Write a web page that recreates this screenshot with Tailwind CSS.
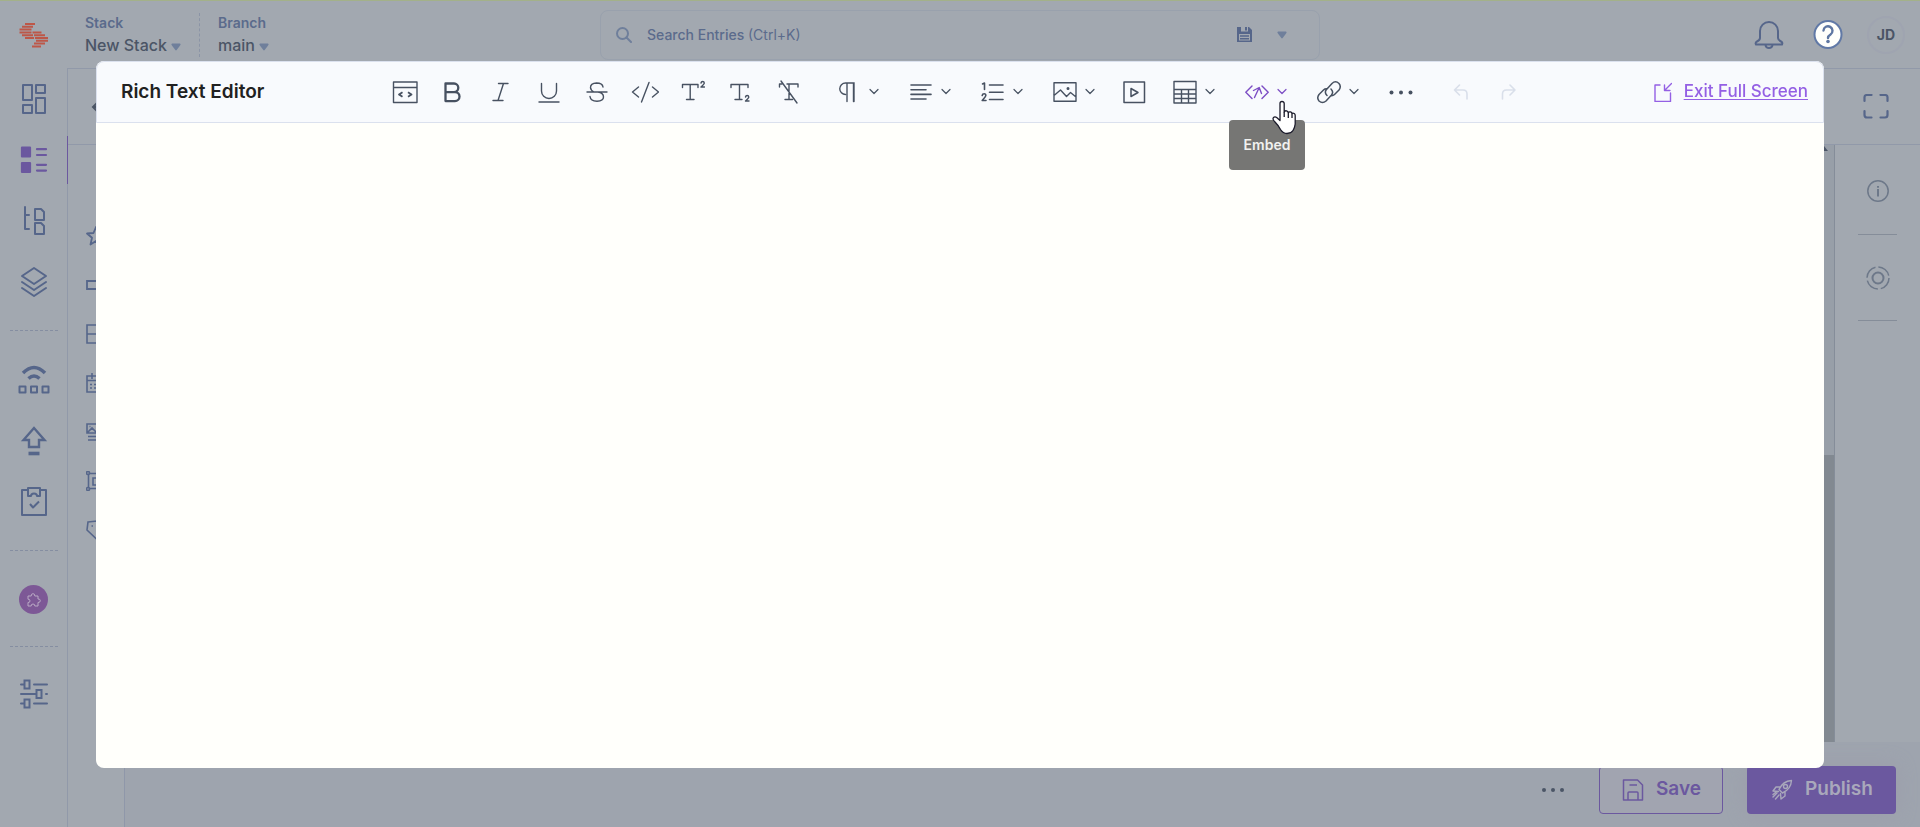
<!DOCTYPE html>
<html lang="en">
<head>
    <meta charset="UTF-8">
    <meta name="viewport" content="width=device-width, initial-scale=1.0">
    <title>Rich Text Editor - New Stack</title>

    <script src="https://cdn.jsdelivr.net/npm/@tailwindcss/browser@4"></script>
</head>
<body class="h-screen overflow-hidden bg-[#a2a8b0] font-['Inter','Liberation_Sans',sans-serif] text-[#4b5566]">

    <div class="flex h-full flex-col border-t border-[#a3b189]">

        <!-- Top bar -->
        <header class="flex h-[67px] shrink-0 items-center pr-[15px]">
            <a href="#" aria-label="Home" class="flex w-[67px] shrink-0 justify-center">
                <svg class="h-[26px] w-[30px]" viewBox="0 0 30 26" stroke="#bd5748" stroke-width="2"><path d="M6 2h10M3 4.800h11M.5 7.600h12M.5 10.400h12M13.500 10.400h9M3 13.200h11M15 13.200h11M6 16h9M16 16h13M17 18.800h12M15 21.600h11M13 24.400h9" /></svg>
            </a>
            <div class="flex h-11 w-[133px] flex-col justify-center gap-1 border-r border-dashed border-[#8b94a6] pl-[18px]">
                <label for="stack" class="text-sm leading-4 font-semibold text-[#5b6b8c]">Stack</label>
                <div class="flex items-center gap-1">
                    <select id="stack" class="appearance-none text-base leading-5 font-medium"><option>New Stack</option></select>
                    <svg class="mt-1 h-2 w-[10px] shrink-0" viewBox="0 0 10 8" fill="#6f7f9b"><path d="M1 .5h8q1 .6.400 1.500L5.700 7q-.7.800-1.400 0L.6 2Q0 1.100 1 .5z" /></svg>
                </div>
            </div>
            <div class="flex h-11 flex-col justify-center gap-1 pl-[18px]">
                <label for="branch" class="text-sm leading-4 font-semibold text-[#5b6b8c]">Branch</label>
                <div class="flex items-center gap-1">
                    <select id="branch" class="appearance-none text-base leading-5 font-medium"><option>main</option></select>
                    <svg class="mt-1 h-2 w-[10px] shrink-0" viewBox="0 0 10 8" fill="#6f7f9b"><path d="M1 .5h8q1 .6.400 1.500L5.700 7q-.7.800-1.400 0L.6 2Q0 1.100 1 .5z" /></svg>
                </div>
            </div>

            <div class="mr-[434px] ml-auto flex h-[50px] w-[720px] items-center rounded-lg border border-[#99a1ad] pr-8 pl-[15px]">
                <svg class="mr-[15px] h-4 w-4" viewBox="0 0 16 16" fill="none" stroke="#6f7f9b" stroke-width="2" stroke-linecap="round"><circle cx="6.500" cy="6.500" r="5.500" /><path d="M10.500 10.500L15 15" /></svg>
                <label for="search" class="text-sm font-medium whitespace-nowrap text-[#5b6b8c]">Search Entries <span class="font-normal">(Ctrl+K)</span></label>
                <input id="search" type="text" class="min-w-0 flex-1 bg-transparent outline-none">
                <button type="button" aria-label="Saved searches" class="mr-[25px]">
                    <svg class="h-[15px] w-[15px]" viewBox="0 0 15 15"><path d="M0 0h12l3 3v12H0z" fill="#56668a" /><path d="M4 0h7v4.500H4zM2 7h11v6.500H2z" fill="#a2a8b0" /><path d="M8 0h2v3.500H8zM3 8.200h9v1.500H3zM3 11h9v1.500H3z" fill="#56668a" /></svg>
                </button>
                <button type="button" aria-label="Search options">
                    <svg class="h-2 w-[10px]" viewBox="0 0 10 8" fill="#6f7f9b"><path d="M1 .5h8q1 .6.400 1.500L5.700 7q-.7.800-1.400 0L.6 2Q0 1.100 1 .5z" /></svg>
                </button>
            </div>

            <button type="button" aria-label="Notifications" class="mr-[29px]">
                <svg class="h-[30px] w-[30px]" viewBox="0 0 30 30" fill="none" stroke="#56668a" stroke-width="2" stroke-linejoin="round"><path d="M6 11a9 9 0 0 1 18 0v7q0 2 3 3.500 2 1 1 3H2q-1-2 1-3Q6 20 6 18zM11.500 25a3.500 3 0 0 0 7 0" /></svg>
            </button>
            <button type="button" aria-label="Help" class="mr-6">
                <svg class="h-[30px] w-[30px]" viewBox="0 0 30 30" fill="none"><circle cx="15" cy="14.500" r="13.500" fill="#fffffb" stroke="#6179a6" stroke-width="2" /><path d="M10.500 10.500a4.500 4.500 0 1 1 7 4q-2.500 1.500-2.500 3.500" stroke="#5f77a2" stroke-width="2.400" stroke-linecap="round" /><circle cx="15" cy="21.500" r="1.800" fill="#5f77a2" /></svg>
            </button>
            <button type="button" class="h-[38px] w-[38px] rounded-full border-2 border-[#9fa4b0] text-sm font-bold">JD</button>
        </header>

        <div class="flex min-h-0 flex-1">
            <!-- Main navigation -->
            <nav class="flex w-[68px] shrink-0 flex-col items-center border-r border-[#9199a9] text-[#56668a]">
                <a href="#" aria-label="Dashboard" class="flex h-[61px] w-full items-center justify-center">
                    <svg class="h-8 w-8" viewBox="0 0 32 32" fill="none" stroke="currentColor" stroke-width="2" stroke-linejoin="round"><path d="M5 2h9v15H5zM18 2h9v8h-9zM5 22h9v8H5zM18 15h9v15h-9z" /></svg>
                </a>
                <a href="#" aria-label="Entries" class="relative flex h-[61px] w-full items-center justify-center text-[#6b589f]">
                    <svg class="h-8 w-8" viewBox="0 0 32 32" fill="none" stroke="currentColor" stroke-width="2.200" stroke-linecap="round"><path d="M4 3.500h8v9H4zM4 19h8v9H4z" fill="currentColor" stroke-linejoin="round" /><path d="M19 5.200h9M19 11h9M19 20.800h9M19 26.600h9" /></svg>
                    <span class="absolute -right-px h-12 w-px bg-[#6b589f]"></span>
                </a>
                <a href="#" aria-label="Content models" class="flex h-[61px] w-full items-center justify-center">
                    <svg class="h-8 w-8" viewBox="0 0 32 32" fill="none" stroke="currentColor" stroke-width="2" stroke-linecap="round" stroke-linejoin="round"><path d="M7 2v22h4M7 10h4M17 4h6l3 3v8h-9zM17 18h6l3 3v8h-9z" /></svg>
                </a>
                <a href="#" aria-label="Releases" class="flex h-[61px] w-full items-center justify-center">
                    <svg class="h-8 w-8" viewBox="0 0 32 32" fill="none" stroke="currentColor" stroke-width="2" stroke-linecap="round" stroke-linejoin="round"><path d="M16 2l12 8-12 8-12-8zM4 16l12 8 12-8M4 22l12 8 12-8" /></svg>
                </a>
                <div class="my-[18px] w-12 border-t border-dashed border-[#858ea1]"></div>
                <a href="#" aria-label="Live preview" class="flex h-[61px] w-full items-center justify-center">
                    <svg class="h-8 w-8" viewBox="0 0 32 32" fill="none" stroke="currentColor"><path d="M5 9Q16-2 27 9M10.500 14.500q5.500-5 11 0" stroke-width="3.500" /><path d="M1.500 22.500h6v6h-6zM13 22.500h6v6h-6zM24.500 22.500h6v6h-6z" stroke-width="2" stroke-linejoin="round" /></svg>
                </a>
                <a href="#" aria-label="Publish queue" class="flex h-[61px] w-full items-center justify-center">
                    <svg class="h-8 w-8" viewBox="0 0 32 32" fill="none" stroke="currentColor" stroke-width="2.400"><path d="M16 3L5.500 15H11v7h10v-7h5.500z" /><path d="M10.500 28.500h11" stroke-width="3.600" /></svg>
                </a>
                <a href="#" aria-label="Tasks" class="flex h-[61px] w-full items-center justify-center">
                    <svg class="h-8 w-8" viewBox="0 0 32 32" fill="none" stroke="currentColor" stroke-width="2"><path d="M10 4H4v25h24V4h-6M10 2h12v8h-3q0-2.500-3-2.500T13 10h-3zM12 18l3 3.500 6-6" stroke-linejoin="round" /></svg>
                </a>
                <div class="my-[18px] w-12 border-t border-dashed border-[#858ea1]"></div>
                <a href="#" aria-label="Marketplace" class="flex h-[61px] w-full items-center justify-center">
                    <span class="flex h-[29px] w-[29px] items-center justify-center rounded-full bg-[#7d5896]">
                        <svg class="h-[14px] w-[14px]" viewBox="0 0 14 14" fill="none" stroke="#b9a9c4" stroke-linejoin="round"><path d="M1 3h3.200q-.2-2.300 1.800-2.300T7.800 3H11v3q2.300-.2 2.300 1.700T11 9.500V13H7.800q.2-2-1.800-2t-1.800 2H1V9.500q2 .2 2-1.600T1 6.200z" /></svg>
                    </span>
                </a>
                <div class="my-4 w-12 border-t border-dashed border-[#858ea1]"></div>
                <a href="#" aria-label="Settings" class="flex h-[61px] w-full items-center justify-center">
                    <svg class="h-8 w-8" viewBox="0 0 32 32" fill="none" stroke="currentColor" stroke-width="2" stroke-linecap="round"><path d="M3 6.500h3M16 6.500h13M3 16h15M28 16h1M3 25.500h3M16 25.500h13" /><path d="M6.500 2.500h5v8h-5zM18.500 12h5v8h-5zM6.500 21.500h5v8h-5z" /></svg>
                </a>
            </nav>

            <!-- Entry page behind the editor -->
            <div class="flex min-w-0 flex-1 flex-col border-t border-[#9199a9]">
                <div class="flex h-[76px] shrink-0 items-center justify-between border-b border-[#9199a9] pr-[31px] pl-[23px]">
                    <button type="button" aria-label="Back">
                        <svg class="h-4 w-4" viewBox="0 0 16 16" fill="none" stroke="#4b5566" stroke-width="2"><path d="M6 4L2 8l4 4M2 8h12" /></svg>
                    </button>
                    <button type="button" aria-label="Expand">
                        <svg class="h-[26px] w-[26px]" viewBox="0 0 26 26" fill="none" stroke="#56668a" stroke-width="2.200" stroke-linecap="round"><path d="M1.500 7V3q0-2 2.500-2h4.500M17.500 1H22q2.500 0 2.500 2v4M24.500 17v4q0 2.500-2.500 2.500h-4.500M8.500 23.500H4q-2.500 0-2.500-2.500v-4" /></svg>
                    </button>
                </div>
                <div class="flex min-h-0 flex-1">
                    <aside class="flex w-[57px] shrink-0 flex-col items-center border-r border-[#8f97a9] pt-[66px] text-[#56668a]">
                        <span class="flex h-[49px] items-center"><svg class="h-5 w-5" viewBox="0 0 20 20" fill="none" stroke="currentColor" stroke-width="1.800" stroke-linejoin="round"><path d="M10 1l2.500 6 6.500.5-5 4.300 1.500 6.700-5.500-3.500L4.500 18.500 6 11.800 1 7.500 7.500 7z" /></svg></span>
                        <span class="flex h-[49px] items-center"><svg class="h-5 w-5" viewBox="0 0 20 20" fill="none" stroke="currentColor" stroke-width="1.800"><path d="M1 6h18v8H1z" /></svg></span>
                        <span class="flex h-[49px] items-center"><svg class="h-5 w-5" viewBox="0 0 20 20" fill="none" stroke="currentColor" stroke-width="1.600"><path d="M1 1h18v18H1zM1 10h18" /></svg></span>
                        <span class="flex h-[49px] items-center"><svg class="h-5 w-5" viewBox="0 0 20 20" fill="none" stroke="currentColor" stroke-width="1.600"><path d="M1 3h18v16H1zM1 7.500h18M6 0v6M14 0v6M4 11.500h2M8 11.500h2M4 15h2M8 15h2" /></svg></span>
                        <span class="flex h-[49px] items-center"><svg class="h-5 w-5" viewBox="0 0 20 20" fill="none" stroke="currentColor" stroke-width="1.600"><path d="M1 2h18v9H1zM1 11l5-5 4 4M3.500 4.500h1M2 14.500h17M2 18h17" /></svg></span>
                        <span class="flex h-[49px] items-center"><svg class="h-5 w-5" viewBox="0 0 20 20" fill="none" stroke="currentColor" stroke-width="1.600"><path d="M2.500 2.500h15v15h-15zM7 7h6v7H7z" /><circle cx="2" cy="2" r="1.500" fill="#a2a8b0" /><circle cx="2" cy="18" r="1.500" fill="#a2a8b0" /></svg></span>
                        <span class="flex h-[49px] items-center"><svg class="h-5 w-5" viewBox="0 0 20 20" fill="none" stroke="currentColor" stroke-width="1.600"><path d="M2 2l9-1 8 8-8.500 10L1 10z" /><path d="M5.500 6h1.500" /></svg></span>
                    </aside>
                    <div class="flex min-w-0 flex-1 flex-col bg-[#9ea4ae]">
                        <div class="flex min-h-0 flex-1 bg-[#a2a8b0]">
                            <!-- Scroll bar -->
                            <div class="ml-auto flex w-[18px] flex-col justify-between bg-[#989fa8]">
                                <svg class="ml-1 h-2 w-2" viewBox="0 0 8 8" fill="#4b5566"><path d="M4 1l4 5H0z" /></svg>
                                <div class="h-[48%] w-full bg-[#828991]"></div>
                            </div>
                            <aside class="flex w-[86px] flex-col items-center border-l border-[#858d99] pt-[35px] text-[#6d7889]">
                                <button type="button" aria-label="Information">
                                    <svg class="h-[22px] w-[22px]" viewBox="0 0 22 22" fill="none" stroke="currentColor" stroke-width="1.500"><circle cx="11" cy="11" r="10.200" /><path d="M11 9v7.500" stroke-width="2" /><path d="M11 6v1.800" stroke-width="2" /></svg>
                                </button>
                                <div class="mt-8 mb-[31px] w-[39px] border-t border-[#858d99]"></div>
                                <button type="button" aria-label="Releases">
                                    <svg class="h-6 w-6" viewBox="0 0 24 24" fill="none" stroke="currentColor"><circle cx="12" cy="12" r="5.500" stroke-width="2" /><circle cx="12" cy="12" r="11" stroke-width="1.500" stroke-dasharray="14.300 3" /></svg>
                                </button>
                                <div class="mt-[30px] w-[39px] border-t border-[#858d99]"></div>
                            </aside>
                        </div>
                        <!-- Entry actions -->
                        <footer class="flex h-[85px] shrink-0 items-center justify-end gap-6 bg-[#9ea4ae] pt-[10px] pr-6">
                            <button type="button" aria-label="More actions" class="mr-[10px]">
                                <svg class="h-6 w-6" viewBox="0 0 24 24" fill="#4b5566"><circle cx="3" cy="12" r="2" /><circle cx="12" cy="12" r="2" /><circle cx="21" cy="12" r="2" /></svg>
                            </button>
                            <button type="button" class="flex h-12 w-[124px] items-center gap-3 rounded border border-[#6b589f] bg-[#a1a4b0] pl-[22px] text-[19px] font-semibold text-[#6b589f]">
                                <svg class="h-[22px] w-[22px]" viewBox="0 0 22 22" fill="none" stroke="currentColor" stroke-width="1.500" stroke-linejoin="round"><path d="M1.500 1h14l5 5v15h-19zM6 21v-7q0-1 1-1h8q1 0 1 1v7M7.500 6H15" /></svg>
                                Save
                            </button>
                            <button type="button" class="flex h-12 w-[149px] items-center gap-3 rounded bg-[#6b589f] pl-6 text-[19px] font-semibold text-[#a9a8bb] shadow-[0_0_20px_#9c9dab]">
                                <svg class="h-[22px] w-[22px]" viewBox="0 0 22 22" fill="none" stroke="currentColor" stroke-width="1.400" stroke-linecap="round" stroke-linejoin="round"><path d="M8 10.500Q12 2 20.500 1.500 20 10 11.500 14zM9.500 8H5l-3 4 5.500.5M14 12.500V17l-4 3-.5-5.500M6 14l-4 4M8 16l-3.500 4M4.500 13.500L2 15.500" /><circle cx="14.500" cy="7.500" r="2" /></svg>
                                Publish
                            </button>
                        </footer>
                    </div>
                </div>
            </div>
        </div>
    </div>

    <!-- Full screen editor -->
    <div class="fixed inset-0 flex px-24 pt-[61px] pb-[59px]">
        <section class="flex flex-1 flex-col rounded-lg bg-[#fffffb]">
            <div class="flex h-[62px] shrink-0 items-center rounded-t-lg border border-[#dbe1ee] bg-[#f8fafd] pr-[15px] pl-6 text-[#475161]">
                <h1 class="w-[260px] shrink-0 text-[19px] font-semibold text-[#212121]">Rich Text Editor</h1>

                <div class="flex shrink-0 items-center">
                    <button type="button" aria-label="Code block" class="flex h-12 w-12 items-center justify-center">
                        <svg class="h-6 w-[26px]" viewBox="0 0 26 24" fill="none" stroke="currentColor" stroke-width="1.400" stroke-linejoin="round"><path d="M1.500 2h23.500v20.500H1.500zM1.500 7.500H25" /><path d="M10.500 12.200l-3.500 2.300 3.500 2.300M16 12.200l3.500 2.300-3.500 2.300" stroke-width="1.800" /></svg>
                    </button>
                    <button type="button" aria-label="Bold" class="flex h-12 w-12 items-center justify-center">
                        <svg class="h-6 w-6" viewBox="0 0 24 24" fill="none" stroke="currentColor" stroke-width="2.300" stroke-linejoin="round"><path d="M4.500 3.500h8.500a4.300 4.300 0 0 1 0 8.600H4.500zM4.500 12.100H14a4.500 4.500 0 0 1 0 9H4.500z" /></svg>
                    </button>
                    <button type="button" aria-label="Italic" class="flex h-12 w-12 items-center justify-center">
                        <svg class="h-6 w-6" viewBox="0 0 24 24" fill="none" stroke="currentColor" stroke-width="1.400" stroke-linecap="round"><path d="M9.500 3.500h9.500M4 20.500h10M14.500 3.500L9 20.500" /></svg>
                    </button>
                    <button type="button" aria-label="Underline" class="flex h-12 w-12 items-center justify-center">
                        <svg class="h-6 w-6" viewBox="0 0 24 24" fill="none" stroke="currentColor" stroke-width="1.400" stroke-linecap="round"><path d="M4.500 3.500V11a7.500 7.500 0 0 0 15 0V3.500M2 22h20" /></svg>
                    </button>
                    <button type="button" aria-label="Strikethrough" class="flex h-12 w-12 items-center justify-center">
                        <svg class="h-6 w-6" viewBox="0 0 24 24" fill="none" stroke="currentColor" stroke-width="1.400" stroke-linecap="round"><path d="M18 7Q17.500 3 11.500 3 5.500 3.300 5.500 7.500 5.500 10 9 12M2 12h20M13 12q5.500 1 5.500 5T12 21.200Q5.500 21.200 5 16.500" /></svg>
                    </button>
                    <button type="button" aria-label="Inline code" class="flex h-12 w-12 items-center justify-center">
                        <svg class="h-6 w-7" viewBox="0 0 28 24" fill="none" stroke="currentColor" stroke-width="1.400" stroke-linecap="round" stroke-linejoin="round"><path d="M7.500 7L1.500 12l6 5M21.500 7l6 5-6 5M18 2.500l-7.500 19.500" /></svg>
                    </button>
                    <button type="button" aria-label="Superscript" class="flex h-12 w-12 items-center justify-center">
                        <svg class="h-6 w-6" viewBox="0 0 24 24" fill="none" stroke="currentColor" stroke-width="1.400" stroke-linecap="round" stroke-linejoin="round"><path d="M1.500 7.500V4.500H17v3M9.200 4.500v15M5.500 19.500H13M20 3q.3-1.500 1.700-1.500T23.300 3q0 1-3.300 4h3.500" /></svg>
                    </button>
                    <button type="button" aria-label="Subscript" class="flex h-12 w-12 items-center justify-center">
                        <svg class="h-6 w-6" viewBox="0 0 24 24" fill="none" stroke="currentColor" stroke-width="1.400" stroke-linecap="round" stroke-linejoin="round"><path d="M2 7.500V4.500h17v3M10.500 4.500v15M6 19.500h7M16.500 17q.3-1.500 1.700-1.500T19.800 17q0 1-3.300 4H20" /></svg>
                    </button>
                    <button type="button" aria-label="Clear formatting" class="flex h-12 w-12 items-center justify-center">
                        <svg class="h-6 w-6" viewBox="0 0 24 24" fill="none" stroke="currentColor" stroke-width="1.400" stroke-linecap="round" stroke-linejoin="round"><path d="M2.500 7V4H5M10 4h11v3M12 4v15.500M8 19.500h7.500M4 1l16 22" /></svg>
                    </button>
                </div>

                <div class="ml-3 flex shrink-0 items-center">
                    <button type="button" aria-label="Paragraph" class="flex h-12 w-[72px] items-center gap-2 pl-3">
                        <svg class="h-6 w-6" viewBox="0 0 24 24" fill="none" stroke="currentColor" stroke-width="1.400"><path d="M17 21.500V3H8.500a5.700 5.700 0 0 0 0 11.500M10 3v18.500M16.500 3v18.500" stroke-linecap="round" /></svg>
                        <svg class="h-[10px] w-[10px]" viewBox="0 0 10 10" fill="none" stroke="currentColor" stroke-width="1.200" stroke-linecap="round" stroke-linejoin="round"><path d="M1 2.500L5 6.500l4-4" /></svg>
                    </button>
                    <button type="button" aria-label="Align" class="flex h-12 w-[72px] items-center gap-2 pl-3">
                        <svg class="h-6 w-6" viewBox="0 0 24 24" fill="none" stroke="currentColor" stroke-width="1.600" stroke-linecap="round"><path d="M2 5h20M2 9.700h15M2 14.400h20M2 19h15" /></svg>
                        <svg class="h-[10px] w-[10px]" viewBox="0 0 10 10" fill="none" stroke="currentColor" stroke-width="1.200" stroke-linecap="round" stroke-linejoin="round"><path d="M1 2.500L5 6.500l4-4" /></svg>
                    </button>
                    <button type="button" aria-label="List" class="flex h-12 w-[72px] items-center gap-2 pl-3">
                        <svg class="h-6 w-6" viewBox="0 0 24 24" fill="none" stroke="currentColor" stroke-width="1.600" stroke-linecap="round" stroke-linejoin="round"><path d="M8.500 5H22M8.500 12.200H22M8.500 19.500H22M1.500 4l2-1v6.500M1.200 15.500q.3-1.700 2-1.700T4.800 15.500q0 1-3.600 5H5" /></svg>
                        <svg class="h-[10px] w-[10px]" viewBox="0 0 10 10" fill="none" stroke="currentColor" stroke-width="1.200" stroke-linecap="round" stroke-linejoin="round"><path d="M1 2.500L5 6.500l4-4" /></svg>
                    </button>
                    <button type="button" aria-label="Image" class="flex h-12 w-[72px] items-center gap-2 pl-3">
                        <svg class="h-6 w-6" viewBox="0 0 24 24" fill="none" stroke="currentColor" stroke-width="1.400" stroke-linejoin="round"><path d="M1 2.800h22v18.400H1zM1 15.500L7.500 10l6 6.500 4-4 5.500 4.500" /><circle cx="15" cy="8.500" r=".8" fill="currentColor" /></svg>
                        <svg class="h-[10px] w-[10px]" viewBox="0 0 10 10" fill="none" stroke="currentColor" stroke-width="1.200" stroke-linecap="round" stroke-linejoin="round"><path d="M1 2.500L5 6.500l4-4" /></svg>
                    </button>
                    <button type="button" aria-label="Video" class="flex h-12 w-12 items-center pl-[10px]">
                        <svg class="h-6 w-6" viewBox="0 0 24 24" fill="none" stroke="currentColor" stroke-width="1.500" stroke-linejoin="round"><path d="M1 2h20.500v20.500H1zM8 8.500v8l7-4z" /></svg>
                    </button>
                    <button type="button" aria-label="Table" class="flex h-12 w-[72px] items-center gap-2 pl-3">
                        <svg class="h-6 w-6" viewBox="0 0 24 24" fill="none" stroke="currentColor" stroke-width="1.400" stroke-linejoin="round"><path d="M1 1.500h22v21.500H1zM1 9.500h22M1 14h22M1 18.500h22M8.500 9.500V23M15.500 9.500V23" /></svg>
                        <svg class="h-[10px] w-[10px]" viewBox="0 0 10 10" fill="none" stroke="currentColor" stroke-width="1.200" stroke-linecap="round" stroke-linejoin="round"><path d="M1 2.500L5 6.500l4-4" /></svg>
                    </button>
                    <div class="relative">
                        <button type="button" aria-describedby="embed-tip" aria-label="Embed" class="flex h-12 w-[72px] items-center gap-2 pl-3 text-[#7c4dc4]">
                            <svg class="h-6 w-6" viewBox="0 0 24 24" fill="none" stroke="currentColor" stroke-width="1.400" stroke-linecap="round" stroke-linejoin="round"><path d="M7 6L.8 12.300l6.200 6.200M17 6l6.200 6.300-6.200 6.200M9.500 17.500L14 8M8.500 10.500L14.200 7.500l2.300 6" /></svg>
                            <svg class="h-[10px] w-[10px]" viewBox="0 0 10 10" fill="none" stroke="currentColor" stroke-width="1.200" stroke-linecap="round" stroke-linejoin="round"><path d="M1 2.500L5 6.500l4-4" /></svg>
                        </button>
                        <div id="embed-tip" role="tooltip" class="absolute top-[52px] -left-1 flex h-[50px] w-[76px] items-center justify-center rounded bg-[#767674] text-sm font-semibold text-[#f1f1ef]">Embed</div>
                        <!-- Pointer -->
                        <svg class="absolute top-8 left-9 h-9 w-[30px]" viewBox="0 0 30 36" fill="#fff" stroke="#1a1a2a" stroke-width="1.300" stroke-linejoin="round"><path d="M11 3.500q0-2 2-2t2.200 2V12q.5-1.500 2.300-1.200 1.500.3 1.700 1.700 1-1 2.300-.6 1.300.400 1.500 1.600 1-.6 2.200 0 1 .7 1 2V24q-.5 4-2.200 6.500Q22 33.500 18 33.500q-4 0-6.500-4-2-4-5.500-7.500-3-3-1.500-4.500 1.500-1.300 3.500.3l3 2.700z" /><path d="M15.200 12v5M19.300 12.500V18M23 13.500V18" fill="none" /></svg>
                    </div>
                    <button type="button" aria-label="Link" class="flex h-12 w-[72px] items-center gap-2 pl-3">
                        <svg class="h-6 w-6" viewBox="0 0 24 24" fill="none" stroke="currentColor" stroke-width="1.500" stroke-linecap="round" stroke-linejoin="round"><path d="M10 15.500Q7 12.500 9.500 9.500L15 3.500q3.500-3.500 7 0 2.500 3 0 6.500L17.500 14.500q-1.500 1.500-3.500 1.200M14 9q3 3 .5 6L9 21q-3.500 3-7 0-2.500-3 0-6.500L6.500 10q1.500-1.500 3.500-1.200" /></svg>
                        <svg class="h-[10px] w-[10px]" viewBox="0 0 10 10" fill="none" stroke="currentColor" stroke-width="1.200" stroke-linecap="round" stroke-linejoin="round"><path d="M1 2.500L5 6.500l4-4" /></svg>
                    </button>
                    <button type="button" aria-label="More" class="flex h-12 w-12 items-center justify-center">
                        <svg class="h-6 w-6" viewBox="0 0 24 24" fill="currentColor"><circle cx="2.500" cy="12.500" r="2" /><circle cx="12" cy="12.500" r="2" /><circle cx="21.500" cy="12.500" r="2" /></svg>
                    </button>
                </div>

                <div class="ml-3 flex shrink-0 items-center text-[#d9dfea]">
                    <button type="button" aria-label="Undo" disabled class="flex h-12 w-12 items-center justify-center">
                        <svg class="h-6 w-6" viewBox="0 0 24 24" fill="none" stroke="currentColor" stroke-width="1.600" stroke-linecap="round" stroke-linejoin="round"><path d="M10.500 5L5.500 10l5 5M5.500 10H14q4 0 4 4v5" /></svg>
                    </button>
                    <button type="button" aria-label="Redo" disabled class="flex h-12 w-12 items-center justify-center">
                        <svg class="h-6 w-6" viewBox="0 0 24 24" fill="none" stroke="currentColor" stroke-width="1.600" stroke-linecap="round" stroke-linejoin="round"><path d="M13 5l5 5-5 5M18 10H9.500q-4 0-4 4v5" /></svg>
                    </button>
                </div>

                <a href="#" class="ml-auto flex items-center gap-3 text-[17px] font-medium whitespace-nowrap text-[#9460e4]">
                    <svg class="h-5 w-[18px]" viewBox="0 0 18 20" fill="none" stroke="currentColor" stroke-width="1.400" stroke-linecap="round" stroke-linejoin="round"><path d="M6 3H1v16.500h15.500V11M17.500 1.500L10.500 8.500M10.500 3v5.500H16" /></svg>
                    <span class="underline underline-offset-2">Exit Full Screen</span>
                </a>
            </div>
            <div contenteditable="true" role="textbox" aria-label="Rich Text Editor" class="flex-1 rounded-b-lg outline-none"></div>
        </section>
    </div>

</body>
</html>
